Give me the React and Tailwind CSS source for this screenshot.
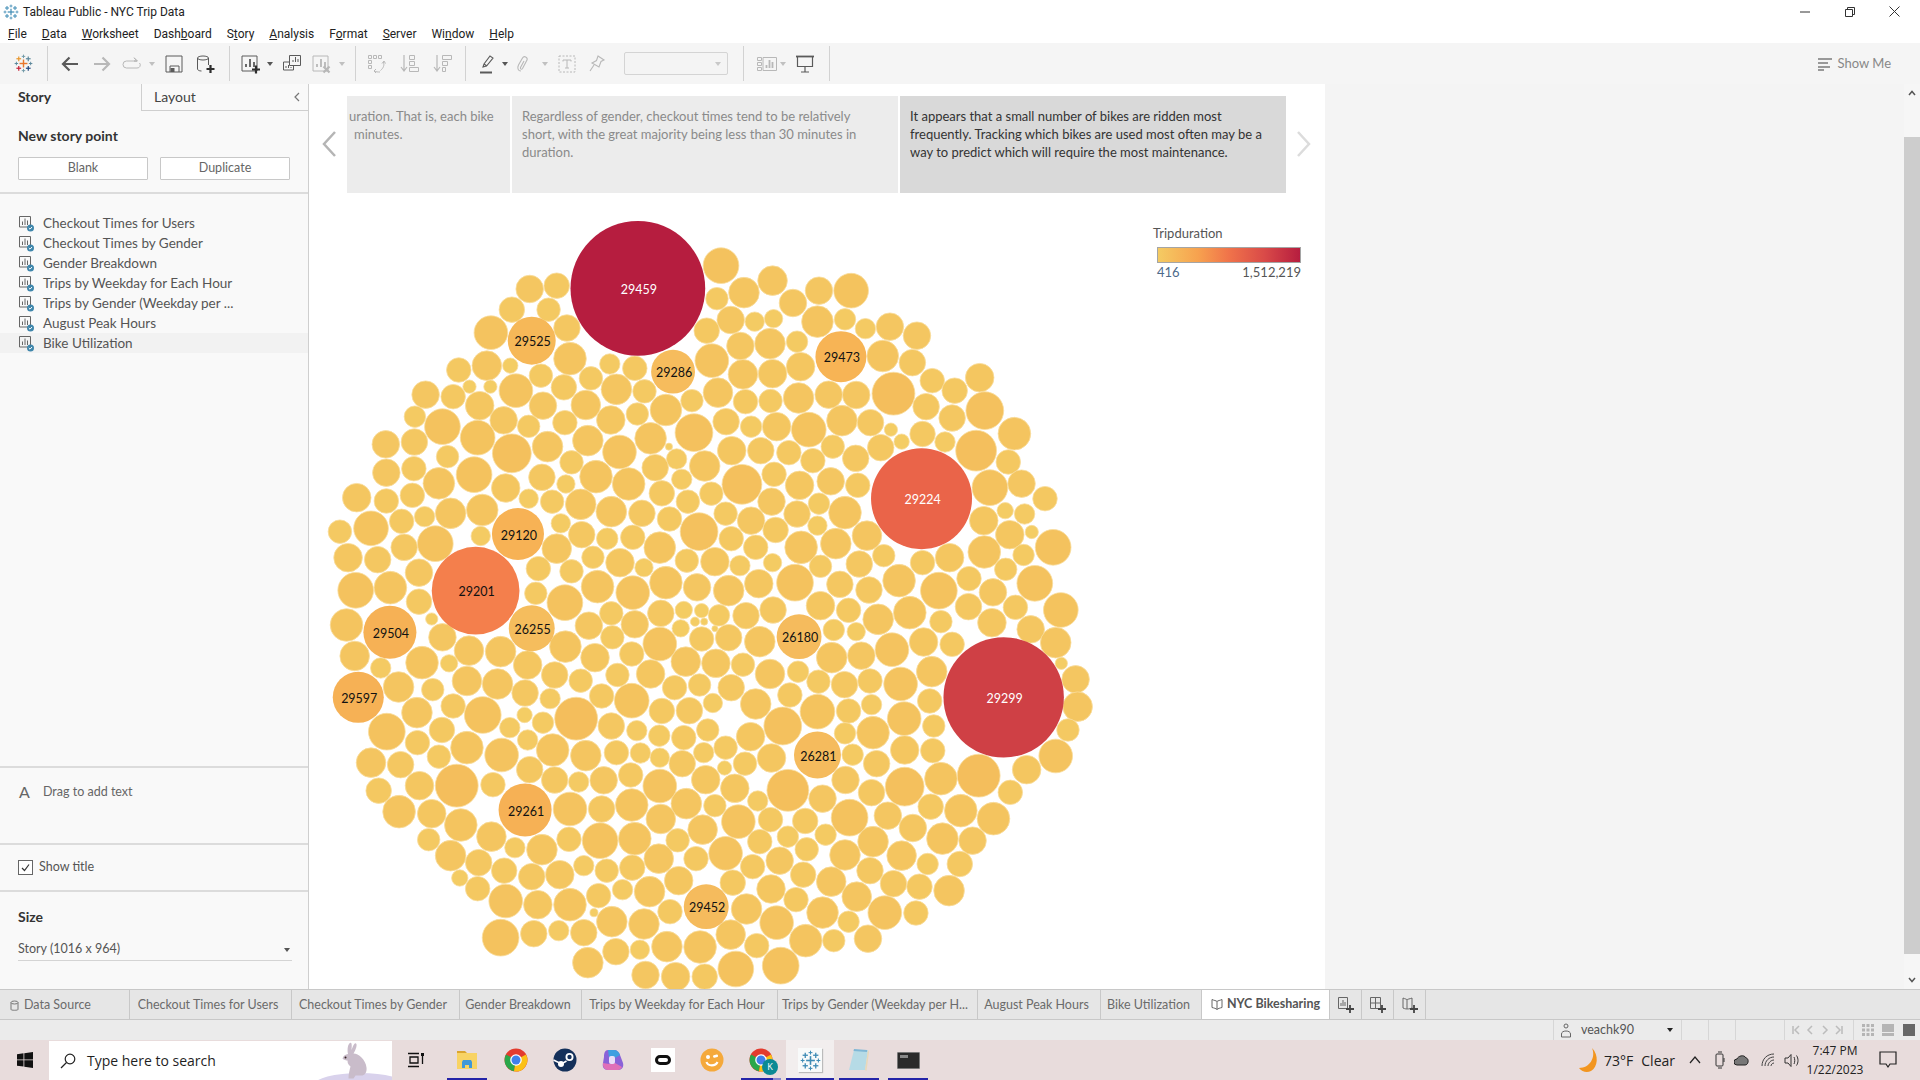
import React from "react";

const TOP = `786,197,70 464,257,50 411,267,54 887,242,58 831,278,60 978,272,54 1041,272,68 927,309,54 778,296,44 376,329,50 448,329,46 805,360,54 852,365,38 889,356,36 758,392,50 975,365,62 1029,358,42 1069,386,40 1117,380,54 1170,407,54 335,398,66 484,384,52 824,438,54 882,431,60 935,425,42 768,482,66 1103,468,62 1161,488,52 490,476,64 272,510,48 327,497,58 373,497,30 433,527,46 568,492,40 617,505,48 531,535,46 829,523,58 887,521,56 942,500,56 1200,542,48 1293,533,56 293,560,26 334,560,26 384,572,66 478,562,50 581,568,60 636,574,46 780,578,58 1124,581,84 1244,572,50 207,584,54 261,590,48 313,617,56 437,617,54 521,615,58 834,605,48 883,603,46 938,594,60 997,584,54 1051,585,54 1188,620,52 1303,632,74 186,650,42 240,680,70 360,661,54 409,679,44 570,660,56 622,642,44 678,630,62 729,602,44 1239,654,52 796,665,52 845,680,42 895,680,56 958,689,68 1023,662,60 1079,668,52 1119,689,26 1181,702,50 1361,701,64 480,668,48 733,698,74 129,733,54 185,726,52 309,713,68 446,740,60 525,722,60 648,715,62 376,760,76 587,756,66 807,752,56 864,752,52 919,758,48 1005,740,46 1099,743,52 1140,725,30 1225,726,40 1286,752,80 250,770,44 684,740,14 699,777,40 966,782,48 1050,775,52 1349,786,48 754,798,60 130,818,54 184,806,48 493,787,46 302,824,70 233,850,62 541,830,64 435,832,52 605,852,64 657,803,52 827,853,78 890,823,48 709,838,40 1001,844,54 1054,856,48 482,852,36 1313,863,70 1375,851,54 1421,896,48 72,893,56 130,903,48 181,886,48 364,864,56 409,896,38 455,905,46 511,913,60 670,880,50 721,905,46 767,881,46 940,856,56 885,905,54 571,935,60 631,940,52 978,911,42 1029,938,64 256,940,60 318,930,62 205,950,40 795,941,46 845,962,54 685,957,48 935,942,52 1301,962,56 1343,932,32 1381,942,40 100,985,68 160,964,48 39,995,46 472,970,38 743,995,74 806,1016,48 513,1004,52 975,977,38 893,990,50 1352,1004,56 1395,996,26 563,1016,42 613,1012,48 1072,1007,58 1437,1042,70 315,1008,38 226,1031,70 464,1046,58 165,1042,52 666,1043,62 943,1042,64 1011,1031,60 854,1042,48 1105,1067,44 1302,1056,64 1379,1065,42 55,1073,56 113,1079,52 535,1072,44 588,1088,56 719,1082,46 774,1085,56 823,1097,40 887,1088,36 1057,1092,52 1181,1088,48 1234,1073,56 428,1106,48 194,1118,54 493,1114,46 635,1103,36 981,1099,44 1344,1108,44 70,1171,70 138,1163,64 544,1160,64 678,1148,64 613,1178,66 739,1162,54 801,1172,60 860,1151,56 931,1148,72 1019,1153,52 1076,1170,52 1135,1142,64 1213,1172,72 1272,1136,48 1401,1150,70 1319,1177,54 423,1180,44`;

const BOTTOM = `194,5,50 52,75,64 219,57,24 240,112,54 480,8,70 571,40,46 617,73,54 527,77,54 668,40,52 713,30,34 748,32,28 782,46,42 835,47,52 888,30,52 707,85,34 735,65,18 753,65,14 774,86,12 981,17,56 1007,90,42 1051,95,36 1036,31,48 1094,58,60 1156,38,64 1217,65,44 1271,20,52 1317,68,56 1363,22,48 1393,88,54 1452,30,68 1442,128,60 1453,190,24 1481,238,54 1485,320,58 1466,390,44 1442,468,66 1183,126,56 1239,133,48 1121,149,66 1061,167,54 1003,173,60 937,215,42 1199,215,60 1138,252,66 1078,243,48 1028,254,52 977,245,46 882,222,58 829,194,46 776,190,56 717,185,58 648,222,56 583,225,46 539,173,56 611,162,48 666,132,66 748,117,48 801,113,52 862,125,60 68,168,58 119,204,40 200,188,64 253,190,34 292,152,58 354,155,60 407,195,56 481,140,62 573,112,46 154,261,60 221,269,44 288,243,58 348,252,60 402,279,52 460,225,52 511,242,46 190,338,60 261,318,48 319,345,72 372,383,40 401,345,30 437,368,42 451,296,40 502,356,84 552,288,48 611,302,68 670,333,50 724,332,52 770,309,38 806,263,52 744,255,44 695,263,48 854,312,60 921,285,48 975,335,68 907,378,74 1036,333,48 1081,314,40 1145,356,66 1195,303,48 1203,378,44 571,378,52 621,392,40 665,407,42 713,413,48 760,390,44 844,410,56 795,443,46 1029,400,42 1084,398,64 131,395,72 239,390,50 288,443,64 191,428,48 233,470,46 356,465,66 407,420,40 456,450,64 521,467,60 581,458,48 628,459,40 666,473,38 710,491,52 752,458,40 833,491,46 885,474,56 1044,464,42 1091,491,52 1146,450,56 1201,452,48 100,488,58 158,494,52 1291,527,84 1385,509,56 115,572,50 195,557,56 268,557,84 339,554,48 411,509,52 460,540,52 507,546,40 556,541,54 609,525,48 666,558,66 756,539,56 793,504,28 813,565,56 917,571,82 1030,540,54 1146,560,76 1217,536,64 1081,578,52 1353,577,48 155,635,64 219,641,56 276,675,64 490,627,66 552,627,52 611,615,64 718,611,60 774,617,44 858,603,40 985,596,54 1197,620,50 1256,632,64 1320,656,64 883,659,48 951,663,50 1038,653,72 1113,647,54 1162,684,54 668,657,58 820,665,66 750,689,58 549,722,70 488,718,48 617,716,64 213,719,44 336,710,58 435,749,60 382,743,40 917,710,42 991,704,42 1220,716,62 1279,722,54 256,767,60 701,721,46 862,725,48 954,748,46 1084,725,60 1029,765,60 795,760,66 1140,767,58 517,797,40 311,788,52 664,776,58 737,776,48 848,800,48 901,782,54 562,812,46 612,803,50 1191,792,42 1254,792,50 361,812,50 415,830,52 470,824,56 274,834,32 703,842,56 947,824,50 1002,845,58 1078,812,52 1124,851,52 1175,860,50 1233,872,60 809,848,50 884,867,56 309,866,48 593,869,40 546,887,48 646,875,60 933,899,48 1052,890,58 364,903,66 427,914,56 490,914,64 686,935,48 836,927,60 895,968,66 985,938,62 1107,938,66 1168,939,48 537,938,16 572,965,60 635,972,60 1036,965,42 354,1013,72 419,1001,52 468,992,40 517,998,52 805,1004,58 952,1022,64 1007,1022,44 1074,1016,54 580,1055,52 627,1049,38 680,1040,60 745,1041,64 856,1037,48 525,1088,60 815,1107,70 903,1097,72 638,1125,54 697,1130,56 754,1130,50`;

const parse = (s, y0) =>
  s.trim().split(/\s+/).map((t) => {
    const [a, b, c] = t.split(",").map(Number);
    return { x: 320 + a / 1.96, y: y0 + b / 3, r: c / 3.92, w: c };
  });

const BUBBLES = [...parse(TOP, 200), ...parse(BOTTOM, 600)];

const LABELED = [
  ["29459", 623, 265 / 3 + 200, 264, "#b61d3f", "#fff"],
  ["29525", 415, 422 / 3 + 200, 94, "#f6b858", "#111"],
  ["29286", 692, 515 / 3 + 200, 86, "#f6bc5d", "#111"],
  ["29473", 1021, 470 / 3 + 200, 100, "#f7b455", "#111"],
  ["29224", 1179, 896 / 3 + 200, 198, "#ea6449", "#fff"],
  ["29120", 388, 1002 / 3 + 200, 102, "#f7b255", "#111"],
  ["29201", 305, 1172 / 3 + 200, 172, "#f47f4c", "#111"],
  ["29504", 137, 97 / 3 + 600, 104, "#f6b155", "#111"],
  ["26255", 415, 85 / 3 + 600, 90, "#f5bd5d", "#111"],
  ["26180", 939, 110 / 3 + 600, 88, "#f5bb5d", "#111"],
  ["29299", 1340, 292 / 3 + 600, 236, "#cf4045", "#fff"],
  ["29597", 75, 292 / 3 + 600, 100, "#f6b155", "#111"],
  ["26281", 975, 465 / 3 + 600, 92, "#f5bb5d", "#111"],
  ["29261", 402, 630 / 3 + 600, 104, "#f6b155", "#111"],
  ["29452", 757, 920 / 3 + 600, 88, "#f5bb5d", "#111"],
];

const mix = (w) => {
  const t = Math.max(0, Math.min(1, (w - 30) / 55));
  const g = Math.round(205 - t * 15);
  const b = Math.round(100 - t * 8);
  return `rgb(244,${g},${b})`;
};

function TableauLogo({ size = 18, mono }) {
  const c = mono
    ? ["#3f8cb5", "#3f8cb5", "#3f8cb5", "#3f8cb5", "#3f8cb5"]
    : ["#e8762d", "#e8962d", "#c72037", "#59879b", "#1f447e"];
  const cross = (x, y, s, col, k, sw) => (
    <g key={k} stroke={col} strokeWidth={sw}>
      <line x1={x - s} x2={x + s} y1={y} y2={y} />
      <line x1={x} x2={x} y1={y - s} y2={y + s} />
    </g>
  );
  return (
    <svg width={size} height={size} viewBox="0 0 24 24">
      {cross(12, 12, 5, c[0], "a", 1.8)}
      {cross(12, 3, 2.2, mono ? c[1] : "#7099a6", "b", 1.2)}
      {cross(12, 21, 2.2, mono ? c[2] : "#7099a6", "c", 1.2)}
      {cross(3, 12, 2.2, c[3], "d", 1.2)}
      {cross(21, 12, 2.2, mono ? c[4] : "#5b879b", "e", 1.2)}
      {cross(6, 6, 3, c[1], "f", 1.5)}
      {cross(18, 6, 3, mono ? c[1] : "#5b879b", "g", 1.5)}
      {cross(6, 18, 3, c[2], "h", 1.5)}
      {cross(18, 18, 3, c[4], "i", 1.5)}
    </svg>
  );
}

const Caret = ({ c = "#888" }) => (
  <svg width="6" height="4" viewBox="0 0 6 4"><path d="M0 0h6L3 4z" fill={c} /></svg>
);

const S = ({ children }) => (
  <svg width="20" height="20" viewBox="0 0 20 20" fill="none" stroke="currentColor" strokeWidth="1">{children}</svg>
);

function Tool({ cls = "", children }) {
  return <div className={`w-[20px] h-full flex items-center justify-center shrink-0 ${cls}`}>{children}</div>;
}
function CaretBox({ cls = "", c }) {
  return <div className={`w-[6px] h-full flex items-center justify-center shrink-0 ${cls}`}><Caret c={c} /></div>;
}
function Div({ cls = "" }) {
  return <div className={`h-[35px] w-px bg-[#d2d2d2] shrink-0 ${cls}`} />;
}

function Toolbar() {
  const dark = "text-[#5a5a5a]";
  const off = "text-[#b8b8b8]";
  const plus = "#2e2e2e";
  return (
    <div className="h-[41px] bg-[#f5f5f5] flex items-center shrink-0">
      <Tool cls="ml-[13px]"><TableauLogo size={19} /></Tool>
      <Div cls="ml-[14px]" />
      <Tool cls={`ml-[12px] ${dark}`}><S><path d="M18 10H3M9.500 3.500L3 10l6.500 6.500" strokeWidth="2.200" /></S></Tool>
      <Tool cls={`ml-[12px] ${off}`}><S><path d="M2 10h15M10.500 3.500L17 10l-6.500 6.500" strokeWidth="2.200" /></S></Tool>
      <Tool cls={`ml-[10px] ${off}`}><S><path d="M15 7H4.500a3 3 0 0 0 0 7H15a3 3 0 0 0 2.500-5M12 3.500L15.500 7 12 7" /><path d="M12 4l3 3-3 0" /></S></Tool>
      <CaretBox cls="ml-[7px]" c="#c0c0c0" />
      <Tool cls={`ml-[9px] ${dark}`}><S><path d="M2 2h16v16H2zM6 18v-6h9v6" /><rect x="6.500" y="14" width="4" height="4" fill="currentColor" stroke="none" /></S></Tool>
      <Tool cls={`ml-[11px] ${dark}`}><S><ellipse cx="8" cy="4" rx="5.500" ry="2" /><path d="M2.500 4v11c0 1 1.500 2 4 2M13.500 4v7" /><path d="M15.500 11v8M11.500 15h8" stroke={plus} strokeWidth="2.200" /></S></Tool>
      <Div cls="ml-[14px]" />
      <Tool cls={`ml-[10px] ${dark}`}><S><path d="M2 2h15v15H2z" /><path d="M6 13v-3M10 13V5M14 13V8" strokeWidth="1.800" /><path d="M16 11.500v8M12 15.500h8" stroke={plus} strokeWidth="2.200" /></S></Tool>
      <CaretBox cls="ml-[7px]" c="#555" />
      <Tool cls={`ml-[9px] ${dark}`}><S><path d="M7.500 1.500h11v10h-11zM7.500 8H1.500v8h10v-4" /><path d="M11 8V6M13.500 8V3M16 8V5M4 14v-2M6.500 14v-3M9 14v-1" /></S></Tool>
      <Tool cls={`ml-[9px] ${off}`}><S><path d="M2 2h15v15H2z" /><path d="M6 13v-3M10 13V5M14 13V8" strokeWidth="1.800" /><path d="M12.500 12.500l6 6M18.500 12.500l-6 6" strokeWidth="2.200" /></S></Tool>
      <CaretBox cls="ml-[8px]" c="#c0c0c0" />
      <Div cls="ml-[10px]" />
      <Tool cls={`ml-[11px] ${off}`}><S><path d="M1.500 1.500h3v3h-3zM6.500 1.500h3v3h-3zM11.500 1.500h3v3h-3zM1.500 6.500h3v3h-3zM1.500 11.500h3v3h-3z" /><path d="M16.500 8c1 3 0 6-3 8.500M13 18c-2 0-4 0-5.500-1" /><path d="M15 9.500L17 7l1.500 2.500M9 15l-2 2 2 2" /></S></Tool>
      <Tool cls={`ml-[13px] ${off}`}><S><path d="M4 1v15M1 13l3 4 3-4" strokeWidth="1.200" /><path d="M9.500 1.500h5v4h-5zM9.500 7.500h5v4h-5zM9.500 13.500h9v4h-9z" /></S></Tool>
      <Tool cls={`ml-[13px] ${off}`}><S><path d="M4 1v15M1 13l3 4 3-4" strokeWidth="1.200" /><path d="M9.500 1.500h9v4h-9zM9.500 7.500h5v4h-5zM9.500 13.500h3v4h-3z" /></S></Tool>
      <Div cls="ml-[12px]" />
      <Tool cls={`ml-[12px] ${dark}`}><S><path d="M5 13l1-3 6-8 3 2-6.500 8z M6 10l3 2" strokeWidth="1.100" /><path d="M2 18.500h12" strokeWidth="2" /></S></Tool>
      <CaretBox cls="ml-[4px]" c="#555" />
      <Tool cls={`ml-[7px] ${off}`}><S><path d="M6 17c-3 0-4-3-2.500-6l4-7c1.500-2.500 5.500-1 4.500 2l-4.500 8.500c-1 1.500-2.500 .5-2-1l3.500-6.500" strokeWidth="1.100" /></S></Tool>
      <CaretBox cls="ml-[7px]" c="#c0c0c0" />
      <Tool cls={`ml-[9px] ${off}`}><S><rect x="2" y="2" width="16" height="16" strokeDasharray="2 1.500" /><path d="M6 6h8M10 6v8M8 14h4M6 6v1.500M14 6v1.500" /></S></Tool>
      <Tool cls={`ml-[10px] ${off}`}><S><path d="M11 2l6 4-3 1.500-2 5.500-7-4 4.500-2.500zM7 11l-4 6" strokeWidth="1.100" /></S></Tool>
      <div className="ml-[17px] w-[104px] h-[23px] border border-[#d4d4d4] rounded-[2px] bg-[#f4f4f4] flex items-center justify-end pr-[6px] shrink-0">
        <Caret c="#c8c8c8" />
      </div>
      <Div cls="ml-[15px]" />
      <Tool cls={`ml-[13px] ${off}`}><S><path d="M0.500 3.500h4v3h-4zM0.500 8.500h4v3h-4zM0.500 13.500h4v3h-4zM6 3.500h13.500v13H6z" /><path d="M9.500 14v-3M12.500 14V6M15.500 14V8" strokeWidth="1.800" /></S></Tool>
      <CaretBox cls="ml-[3px]" c="#c0c0c0" />
      <Tool cls={`ml-[9px] ${dark}`}><S><path d="M1 2.500h18" strokeWidth="1.800" /><path d="M2.500 3v9.500h15V3M10 12.500v5.500M6 18h8" strokeWidth="1.200" /></S></Tool>
      <Div cls="ml-[14px]" />
      <div className="ml-auto mr-[29px] flex items-center gap-[6px] text-[#888888] text-[13px] font-['Lato',sans-serif]">
        <svg width="14" height="14" viewBox="0 0 14 14" fill="#999"><rect x="0" y="1" width="14" height="2" /><rect x="0" y="5" width="10" height="2" /><rect x="0" y="9" width="12" height="2" /><rect x="0" y="12" width="6" height="2" /></svg>
        <span>Show Me</span>
      </div>
    </div>
  );
}

function SheetIcon() {
  return (
    <svg width="17" height="17" viewBox="0 0 17 17" className="shrink-0">
      <path d="M1.500 1.500h11v10.500h-11z" fill="none" stroke="#666" strokeWidth="1" />
      <path d="M4.500 10V6.500M7 10V3.500M9.500 10V5.500" stroke="#666" strokeWidth="1" />
      <circle cx="12.500" cy="13" r="3.500" fill="#3f86ab" />
      <path d="M10.800 13l1.200 1.200 2-2.200" stroke="#fff" strokeWidth="1" fill="none" />
    </svg>
  );
}

const STORIES = [
  "Checkout Times for Users",
  "Checkout Times by Gender",
  "Gender Breakdown",
  "Trips by Weekday for Each Hour",
  "Trips by Gender (Weekday per ...",
  "August Peak Hours",
  "Bike Utilization",
];

function Sidebar() {
  return (
    <div className="w-[309px] shrink-0 bg-[#f9f9f9] border-r border-[#cfcfcf] flex flex-col font-['Lato',sans-serif] text-[#444444]">
      <div className="h-[27px] flex shrink-0">
        <div className="w-[141px] pl-[18px] text-[14px] font-bold text-[#333333] leading-[26px]">Story</div>
        <div className="flex-1 border-l border-b border-[#cfcfcf] pl-[12px] text-[14px] leading-[26px] flex items-center justify-between pr-[7px]">
          <span>Layout</span>
          <svg width="8" height="12" viewBox="0 0 8 12" fill="none" stroke="#777" strokeWidth="1.200"><path d="M6 2L2 6l4 4" /></svg>
        </div>
      </div>
      <div className="h-[83px] border-b-2 border-[#dcdcdc] shrink-0 px-[18px] pt-[15px]">
        <div className="text-[14px] font-bold text-[#333333] leading-[20px]">New story point</div>
        <div className="flex gap-[12px] mt-[11px]">
          <div className="w-[130px] h-[23px] bg-white border border-[#c8c8c8] rounded-[1px] flex items-center justify-center text-[12.5px] text-[#666666]">Blank</div>
          <div className="w-[130px] h-[23px] bg-white border border-[#c8c8c8] rounded-[1px] flex items-center justify-center text-[12.5px] text-[#666666]">Duplicate</div>
        </div>
      </div>
      <div className="pt-[19px] flex flex-col shrink-0">
        {STORIES.map((s, i) => (
          <div key={s} className={`h-[20px] flex items-center pl-[18px] gap-[8px] text-[13.5px] text-[#555555] ${i === 6 ? "bg-[#f2f2f2]" : ""}`}>
            <SheetIcon />
            <span>{s}</span>
          </div>
        ))}
      </div>
      <div className="flex-1" />
      <div className="h-[77px] border-t-2 border-[#dcdcdc] shrink-0 flex items-start pt-[12px] pl-[19px] gap-[12px] text-[12.5px] leading-[24px] text-[#666666]">
        <span className="text-[16px] w-[12px] text-[#666666]">A</span>
        <span>Drag to add text</span>
      </div>
      <div className="h-[47px] border-t-2 border-[#dcdcdc] shrink-0 flex items-center pl-[18px] gap-[6px] text-[12.5px] text-[#555555]">
        <span className="w-[15px] h-[15px] border border-[#666666] bg-white flex items-center justify-center">
          <svg width="11" height="11" viewBox="0 0 11 11" fill="none" stroke="#333" strokeWidth="1.200"><path d="M2 6l2.500 2.500L9 2.500" /></svg>
        </span>
        <span>Show title</span>
      </div>
      <div className="h-[99px] border-t-2 border-[#dcdcdc] shrink-0 px-[18px] pt-[15px]">
        <div className="text-[14px] font-bold text-[#333333] leading-[20px]">Size</div>
        <div className="mt-[12px] w-[274px] h-[22px] border-b border-[#d4d4d4] flex items-center justify-between pr-[2px] text-[12.5px] text-[#555555]">
          <span>Story (1016 x 964)</span>
          <Caret c="#555" />
        </div>
      </div>
    </div>
  );
}

function StoryNav() {
  return (
    <div className="h-[109px] flex items-start pt-[12px] shrink-0 font-['Lato',sans-serif] text-[13px] leading-[18px] whitespace-nowrap">
      <div className="w-[38px] h-[97px] flex items-center justify-center shrink-0 pl-[2px] pb-[2px]">
        <svg width="16" height="28" viewBox="0 0 16 28" fill="none" stroke="#b5b5b5" strokeWidth="2.500"><path d="M14 2L3 14l11 12" /></svg>
      </div>
      <div className="w-[163px] h-[97px] bg-[#ececec] overflow-hidden text-[#8a8a8a] pt-[11px] shrink-0">
        <div className="ml-[2px]">uration. That is, each bike</div>
        <div className="ml-[7px]">minutes.</div>
      </div>
      <div className="w-[386px] h-[97px] ml-[2px] bg-[#ececec] text-[#8a8a8a] pt-[11px] pl-[10px] shrink-0">
        <div>Regardless of gender, checkout times tend to be relatively</div>
        <div>short, with the great majority being less than 30 minutes in</div>
        <div>duration.</div>
      </div>
      <div className="w-[386px] h-[97px] ml-[2px] bg-[#d9d9d9] text-[#333333] pt-[11px] pl-[10px] shrink-0">
        <div>It appears that a small number of bikes are ridden most</div>
        <div>frequently. Tracking which bikes are used most often may be a</div>
        <div>way to predict which will require the most maintenance.</div>
      </div>
      <div className="w-[35px] h-[97px] flex items-center justify-center shrink-0 pb-[2px]">
        <svg width="16" height="28" viewBox="0 0 16 28" fill="none" stroke="#dcdcdc" strokeWidth="2.500"><path d="M2 2l11 12L2 26" /></svg>
      </div>
    </div>
  );
}

function Chart() {
  return (
    <div className="relative flex-1 overflow-hidden">
      <svg width="1016" height="796" viewBox="309 193 1016 796" className="block">
        {BUBBLES.map((b, i) => (
          <circle key={i} cx={b.x} cy={b.y} r={b.r} fill={mix(b.w)} stroke="#f9dd9e" strokeWidth="0.800" />
        ))}
        {LABELED.map(([t, px, y, w, fill, tc]) => {
          const x = 320 + px / 1.96;
          return (
            <g key={t}>
              <circle cx={x} cy={y} r={w / 3.92} fill={fill} />
              <text x={x + 1} y={y + 5.500} textAnchor="middle" fontSize="12.500" fontFamily="Lato, sans-serif" fill={tc}>{t}</text>
            </g>
          );
        })}
      </svg>
      <div className="absolute left-[844px] top-[32px] w-[152px] font-['Lato',sans-serif] text-[13px] text-[#555555]">
        <div className="leading-[16px]">Tripduration</div>
        <div className="ml-[4px] mt-[6px] w-[144px] h-[16px] border border-[#a5a5a5] bg-[linear-gradient(90deg,#f4cb63_0%,#f7a24f_28%,#f0734a_50%,#d94a48_75%,#b61d3f_100%)]" />
        <div className="ml-[4px] w-[144px] flex justify-between leading-[18px] text-[#4d6a8a]">
          <span>416</span><span className="text-[#555555]">1,512,219</span>
        </div>
      </div>
    </div>
  );
}

function AddIcon({ kind }) {
  return (
    <svg width="18" height="18" viewBox="0 0 18 18" fill="none" stroke="#666" strokeWidth="1">
      {kind === 0 && <path d="M1.500 1.500h9v11h-9zM4 10V7M6 10V4M8 10V6" />}
      {kind === 1 && <path d="M1.500 1.500h10v11h-10zM1.500 7h10M6.500 1.500v11" />}
      {kind === 2 && <path d="M2 2c2 1 4 1 4 2 0-1 3-1 5-2v10c-2 1-5 1-5 1s-2 0-4-1zM6 4v9" />}
      <path d="M13 9v8M9 13h8" strokeWidth="1.800" stroke="#444" />
    </svg>
  );
}

const TABS = [
  ["Checkout Times for Users", 162],
  ["Checkout Times by Gender", 168],
  ["Gender Breakdown", 122],
  ["Trips by Weekday for Each Hour", 196],
  ["Trips by Gender (Weekday per H...", 200],
  ["August Peak Hours", 123],
  ["Bike Utilization", 101],
];

function TabBar() {
  return (
    <div className="h-[31px] bg-[#e6e6e6] border-t border-b border-[#c8c8c8] flex shrink-0 font-['Lato',sans-serif] text-[12.5px] text-[#6b6b6b]">
      <div className="w-[130px] border-r border-[#c8c8c8] flex items-center pl-[10px] pt-[2px] gap-[5px]">
        <svg width="9" height="12" viewBox="0 0 9 12" fill="none" stroke="#777"><ellipse cx="4.500" cy="2.500" rx="3.500" ry="1.500" /><path d="M1 2.500v7c0 1 7 1 7 0v-7" /></svg>
        <span>Data Source</span>
      </div>
      {TABS.map(([t, w]) => (
        <div key={t} className="border-r border-[#c8c8c8] flex items-center justify-center pr-[5px] pt-[2px] whitespace-nowrap overflow-hidden" style={{ width: w }}>{t}</div>
      ))}
      <div className="w-[128px] bg-white border-r border-[#c8c8c8] flex items-center justify-center gap-[4px] font-bold text-[#555555] pb-[1px]">
        <svg width="12" height="13" viewBox="0 0 12 13" fill="none" stroke="#666"><path d="M1 1.500c2 1 4 1 5 2 1-1 3-1 5-2v8c-2 .5-4 1-5 2-1-1-3-1.500-5-2zM6 3.500v8" /></svg>
        <span>NYC Bikesharing</span>
      </div>
      {[0, 1, 2].map((k) => (
        <div key={k} className="w-[32px] border-r border-[#c8c8c8] flex items-center justify-center"><AddIcon kind={k} /></div>
      ))}
    </div>
  );
}

function StatusBar() {
  const cell = "h-full border-l border-[#d6d6d6]";
  return (
    <div className="h-[20px] bg-[#ebebeb] flex justify-end shrink-0 font-['Lato',sans-serif] text-[12.5px] text-[#555555]">
      <div className={`${cell} w-[128px] flex items-center pl-[6px] gap-[9px] pr-[8px]`}>
        <svg width="12" height="15" viewBox="0 0 12 15" fill="none" stroke="#666"><circle cx="6" cy="3" r="2" /><path d="M1.500 14v-3c0-2 2-3 4.500-3s4.500 1 4.500 3v3z" /></svg>
        <span className="flex-1">veachk90</span>
        <Caret c="#222" />
      </div>
      <div className={`${cell} w-[27px]`} />
      <div className={`${cell} w-[27px]`} />
      <div className={`${cell} w-[49px]`} />
      <div className={`${cell} w-[69px] flex items-center justify-between pl-[7px] pr-[10px]`}>
        {["M1 1v8M7 1L3 5l4 4", "M6 1L2 5l4 4", "M2 1l4 4-4 4", "M7 1v8M1 1l4 4-4 4"].map((d) => (
          <svg key={d} width="8" height="10" viewBox="0 0 8 10" fill="none" stroke="#bcbcbc" strokeWidth="1.500"><path d={d} /></svg>
        ))}
      </div>
      <div className={`${cell} w-[67px] flex items-center justify-around pl-[4px] pr-[1px]`}>
        <svg width="12" height="12" viewBox="0 0 12 12" fill="#b5b5b5"><rect width="3" height="3" /><rect x="4.500" width="3" height="3" /><rect x="9" width="3" height="3" /><rect y="4.500" width="3" height="3" /><rect x="4.500" y="4.500" width="3" height="3" /><rect x="9" y="4.500" width="3" height="3" /><rect y="9" width="3" height="3" /><rect x="4.500" y="9" width="3" height="3" /><rect x="9" y="9" width="3" height="3" /></svg>
        <svg width="12" height="12" viewBox="0 0 12 12" fill="#b5b5b5"><rect width="12" height="8" /><rect y="9" width="12" height="3" /></svg>
        <svg width="12" height="12" viewBox="0 0 12 12" fill="#666"><rect width="12" height="12" /></svg>
      </div>
    </div>
  );
}

function TaskIcon({ cls = "", on, children }) {
  return (
    <div className={`relative h-full flex items-center justify-center shrink-0 ${cls}`}>
      {children}
      {on && <div className="absolute left-0 right-0 bottom-0 h-[2px] bg-[#2424a8]" />}
    </div>
  );
}

const Chrome = () => (
  <svg width="24" height="24" viewBox="0 0 24 24">
    <circle cx="12" cy="12" r="11.500" fill="#e33b2e" />
    <path d="M12 12L2 6.500A11.500 11.500 0 0 0 10 23.300z" fill="#2aa74a" />
    <path d="M12 12l10-5.500A11.500 11.500 0 0 1 10 23.300z" fill="#fbc116" />
    <circle cx="12" cy="12" r="5.800" fill="#fff" /><circle cx="12" cy="12" r="4.500" fill="#3f80ea" />
  </svg>
);

function Taskbar() {
  return (
    <div className="h-10 bg-[#e8dcdc] flex items-center shrink-0 relative font-['Open_Sans',sans-serif]">
      <div className="w-[49px] h-full flex items-center justify-center shrink-0">
        <svg width="16" height="16" viewBox="0 0 16 16" fill="#111"><path d="M0 2.200l6.500-.9v6.200H0zM7.300 1.200L16 0v7.500H7.300zM0 8.300h6.500v6.300L0 13.800zM7.300 8.300H16V16l-8.700-1.200z" /></svg>
      </div>
      <div className="w-[343px] h-[39px] self-end bg-white flex items-center relative overflow-hidden shrink-0">
        <svg width="16" height="16" viewBox="0 0 16 16" fill="none" stroke="#222" strokeWidth="1.200" className="ml-[11px]"><circle cx="10" cy="6" r="4.800" /><path d="M6.500 9.500L1 15" /></svg>
        <span className="ml-[11px] text-[14px] text-[#1f1f1f]">Type here to search</span>
        <svg width="80" height="39" viewBox="0 0 80 39" className="absolute right-0 top-0">
          <ellipse cx="48" cy="44" rx="46" ry="12" fill="#d9d2ec" />
          <path d="M36 13c-1-5 0-10 2-11s2 3 1.500 7c1.500-4 3-7.500 4.500-6.500s0 6-2.500 10c5 0 12 6 13 14 .5 4-1 7-4 8h-7l-2 3h-5c0-5 1-8 2-12-2-2-3-3-3-6-1 0-4-.5-5-2 1-3 3-4 5.500-4.500z" fill="#c9bcca" />
          <circle cx="33.500" cy="16.500" r="1" fill="#332222" />
        </svg>
      </div>
      <TaskIcon cls="w-[48px]">
        <svg width="16" height="16" viewBox="0 0 16 16" fill="none" stroke="#111" strokeWidth="1.300"><path d="M0 1.500h11M0 14.500h11M2 5h8v6H2zM14.500 4v8" /><rect x="13" y="1" width="3" height="3" fill="#111" stroke="none" /></svg>
      </TaskIcon>
      <TaskIcon cls="w-[40px] ml-[7px]" on>
        <svg width="22" height="20" viewBox="0 0 22 20"><path d="M1 1h8l2 2h-10z" fill="#dba52f" /><path d="M1 3h20v16H1z" fill="#f8d364" /><path d="M6 18v-6l1-2h8l1 2v6h-3v-3H9v3z" fill="#3f98d8" /></svg>
      </TaskIcon>
      <TaskIcon cls="w-[24px] ml-[17px]"><Chrome /></TaskIcon>
      <TaskIcon cls="w-[24px] ml-[25px]">
        <svg width="24" height="24" viewBox="0 0 24 24"><circle cx="12" cy="12" r="11.500" fill="#14305a" /><circle cx="16.500" cy="9" r="4" fill="#fff" /><circle cx="16.500" cy="9" r="2.200" fill="#14305a" /><circle cx="8" cy="16" r="3" fill="#fff" /><path d="M0.500 12l8 4 5-3" stroke="#fff" strokeWidth="1.500" fill="none" /></svg>
      </TaskIcon>
      <TaskIcon cls="w-[24px] ml-[23px]">
        <svg width="24" height="24" viewBox="0 0 24 24"><path d="M8 2h6c3 0 5 2 6 5l3 8c1 4-1 7-5 7H8c-4 0-6-3-5-7l1-6c0-4 1-7 4-7z" fill="#8a62d8" /><path d="M8 2h6c3 0 5 2 6 5l-5 3-6-1z" fill="#3f9fe0" /><path d="M3 15c-.5 4 2 7 5 7h10c1 0 3-1 4-3l-7-4-6 1z" fill="#e070b8" /><rect x="9" y="8" width="6" height="8" rx="2" fill="#e9def8" /></svg>
      </TaskIcon>
      <TaskIcon cls="w-[24px] ml-[27px]">
        <div className="w-[24px] h-[24px] bg-white flex items-center justify-center"><div className="w-[16px] h-[10px] rounded-[5px] border-[3px] border-[#111111]" /></div>
      </TaskIcon>
      <TaskIcon cls="w-[24px] ml-[25px]">
        <svg width="24" height="24" viewBox="0 0 24 24"><circle cx="12" cy="12" r="11.500" fill="#f5a93b" /><circle cx="8" cy="9" r="2" fill="#fff" /><rect x="13" y="7" width="5" height="2.500" rx="1" fill="#fff" transform="rotate(-15 15 8)" /><path d="M6.500 14c1.500 4.500 9 4.500 11 0" stroke="#fff" strokeWidth="2.200" fill="none" /></svg>
      </TaskIcon>
      <TaskIcon cls="w-[40px] ml-[17px]">
        <div className="relative"><Chrome />
          <div className="absolute -right-[5px] -bottom-[3px] w-[16px] h-[16px] rounded-full bg-[#0b8a94] text-white text-[9px] leading-[16px] text-center">K</div>
        </div>
        <div className="absolute left-0 w-[32px] bottom-0 h-[2px] bg-[#2424a8]" />
        <div className="absolute right-0 w-[8px] bottom-0 h-[2px] bg-[#8888d0]" />
      </TaskIcon>
      <TaskIcon cls="w-[48px] ml-[5px] bg-[#f2eeee]" on>
        <div className="w-[24px] h-[24px] bg-[#f8fafa] flex items-center justify-center shadow-[1px_1px_1px_#bbb]"><TableauLogo size={21} mono /></div>
      </TaskIcon>
      <TaskIcon cls="w-[40px] ml-[5px]" on>
        <svg width="24" height="24" viewBox="0 0 24 24"><path d="M7 2h14l-3 20H2z" fill="#b6dbe6" /><path d="M18 22l3-20 1 2-2.500 19z" fill="#e8d8b8" /><path d="M7 1l13 1v2L6.500 3z" fill="#7fb7d6" /></svg>
      </TaskIcon>
      <TaskIcon cls="w-[40px] ml-[9px]" on>
        <div className="w-[23px] h-[17px] bg-[#2a2a2a] border border-[#777777] rounded-[1px] p-[2px]"><div className="w-[8px] h-[3px] bg-[#888888]" /></div>
      </TaskIcon>
      <div className="flex-1" />
      <div className="flex items-center h-full">
        <svg width="22" height="28" viewBox="0 0 22 28" className="mr-[4px]"><path d="M14 2c4 9-2 20-13 20 3 4 8 5 12 3 7-4 8-16 1-23z" fill="#f2951f" /></svg>
        <span className="text-[14px] text-[#222222] mr-[8px]">73°F</span>
        <span className="text-[14px] text-[#222222] mr-[14px]">Clear</span>
        <svg width="12" height="8" viewBox="0 0 12 8" fill="none" stroke="#222" strokeWidth="1.200" className="mr-[14px]"><path d="M1 7l5-6 5 6" /></svg>
        <svg width="11" height="18" viewBox="0 0 11 18" fill="none" stroke="#333" className="mr-[8px]"><rect x="1" y="3" width="7" height="12" rx="1" /><path d="M3 1h4M3 17h4M9 7v4" /></svg>
        <svg width="16" height="12" viewBox="0 0 16 12" fill="#777" className="mr-[11px]"><path d="M3 11a3 3 0 0 1 0-6c1-3 7-5 9-1 3 0 3 7-1 7z" stroke="#222" /></svg>
        <svg width="14" height="14" viewBox="0 0 14 14" fill="none" stroke="#444" className="mr-[9px]"><path d="M1 13c0-7 5-12 12-12M4 13c0-5 4-9 9-9M7 13c0-3 3-6 6-6M10 13c0-1 1-3 3-3" /></svg>
        <svg width="16" height="15" viewBox="0 0 16 15" fill="none" stroke="#333" className="mr-[4px]"><path d="M1 5h3l3-3.500v12L4 10H1zM10 4c1 2 1 5 0 7M12.500 2.500c2 3 2 7 0 10" /></svg>
        <div className="w-[62px] flex flex-col items-center text-[12px] leading-[19px] text-[#222222] mr-[13px] whitespace-nowrap">
          <span>7:47 PM</span>
          <span>1/22/2023</span>
        </div>
        <svg width="18" height="18" viewBox="0 0 18 18" fill="none" stroke="#222" strokeWidth="1.200" className="mr-[23px]"><path d="M1 1h16v12h-6l-2 3-2-3H1z" /></svg>
      </div>
    </div>
  );
}

export default function App() {
  return (
    <div className="w-[1920px] h-[1080px] flex flex-col overflow-hidden bg-white">
      <div className="h-[22px] flex items-center shrink-0 pl-[3px] pt-[1px] font-['Roboto',sans-serif] text-[12px] text-[#222222]">
        <TableauLogo size={16} mono />
        <span className="ml-[4px]">Tableau Public - NYC Trip Data</span>
        <div className="ml-auto flex items-center h-full">
          <div className="w-[45px] flex justify-center"><svg width="10" height="10" viewBox="0 0 10 10" stroke="#333"><path d="M0 5h10" /></svg></div>
          <div className="w-[45px] flex justify-center"><svg width="10" height="10" viewBox="0 0 10 10" stroke="#333" fill="none"><path d="M0.500 2.500h7v7h-7zM2.500 2.500v-2h7v7h-2" /></svg></div>
          <div className="w-[45px] flex justify-center mr-[3px]"><svg width="11" height="11" viewBox="0 0 11 11" stroke="#333"><path d="M0.500 0.500l10 10M10.500 0.500l-10 10" /></svg></div>
        </div>
      </div>
      <div className="h-[21px] flex items-center gap-[15px] pl-[8px] pt-[2px] shrink-0 font-['Roboto',sans-serif] text-[12px] text-[#222222]">
        <span><u>F</u>ile</span>
        <span><u>D</u>ata</span>
        <span><u>W</u>orksheet</span>
        <span>Dash<u>b</u>oard</span>
        <span>S<u>t</u>ory</span>
        <span><u>A</u>nalysis</span>
        <span>F<u>o</u>rmat</span>
        <span><u>S</u>erver</span>
        <span>Wi<u>n</u>dow</span>
        <span><u>H</u>elp</span>
      </div>
      <Toolbar />
      <div className="flex-1 flex min-h-0">
        <Sidebar />
        <div className="w-[1016px] shrink-0 bg-white flex flex-col"><StoryNav /><Chart /></div>
        <div className="flex-1 bg-[#f4f4f4]" />
        <div className="w-4 shrink-0 bg-[#f6f6f6] flex flex-col items-center">
          <div className="h-[53px] w-full flex justify-center pt-[6px]">
            <svg width="8" height="6" viewBox="0 0 8 6" fill="none" stroke="#555" strokeWidth="1.500"><path d="M1 5l3-3.500L7 5" /></svg>
          </div>
          <div className="h-[817px] w-full bg-[#cdcdcd]" />
          <div className="flex-1 w-full flex justify-center items-end pb-[6px]">
            <svg width="8" height="6" viewBox="0 0 8 6" fill="none" stroke="#555" strokeWidth="1.500"><path d="M1 1l3 3.500L7 1" /></svg>
          </div>
        </div>
      </div>
      <TabBar />
      <StatusBar />
      <Taskbar />
    </div>
  );
}
